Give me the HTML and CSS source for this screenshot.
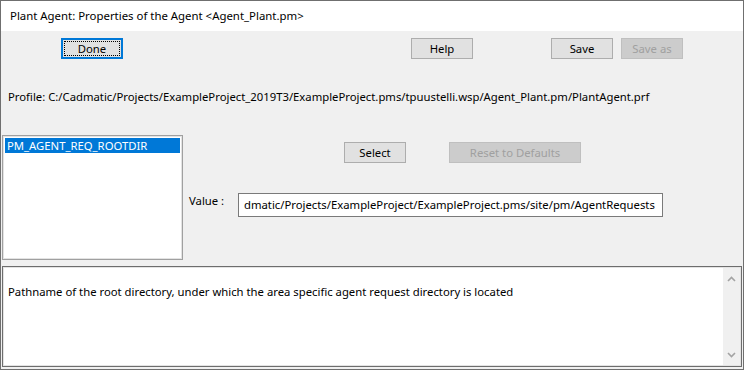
FILE: index.html
```html
<!DOCTYPE html>
<html>
<head>
<meta charset="utf-8">
<link rel="stylesheet" href="styles.css">
</head>
<body>
<div class="window">
  <div class="titlebar">Plant Agent: Properties of the Agent &lt;Agent_Plant.pm&gt;</div>
  <div class="content">
    <div class="toolbar">
      <button class="btn btn-default btn-done"><span class="focus">Done</span></button>
      <button class="btn btn-help">Help</button>
      <button class="btn btn-save">Save</button>
      <button class="btn btn-saveas" disabled>Save as</button>
    </div>
    <div class="profile">Profile: C:/Cadmatic/Projects/ExampleProject_2019T3/ExampleProject.pms/tpuustelli.wsp/Agent_Plant.pm/PlantAgent.prf</div>
    <div class="middle">
      <div class="listbox">
        <div class="item selected">PM_AGENT_REQ_ROOTDIR</div>
      </div>
      <div class="side">
        <div class="side-row">
          <button class="btn btn-select">Select</button>
          <button class="btn btn-reset" disabled>Reset to Defaults</button>
        </div>
        <div class="value-row">
          <span class="value-label">Value :</span>
          <div class="value-input">dmatic/Projects/ExampleProject/ExampleProject.pms/site/pm/AgentRequests</div>
        </div>
      </div>
    </div>
    <div class="desc">
      <div class="desc-text">Pathname of the root directory, under which the area specific agent request directory is located</div>
      <div class="scrollbar">
        <svg class="arrow" width="9" height="6" viewBox="0 0 9 6"><polyline points="1,5 4.5,1.5 8,5" fill="none" stroke="#a3a3a3" stroke-width="1.6"/></svg>
        <svg class="arrow" width="9" height="6" viewBox="0 0 9 6"><polyline points="1,1 4.5,4.5 8,1" fill="none" stroke="#a3a3a3" stroke-width="1.6"/></svg>
      </div>
    </div>
  </div>
</div>
</body>
</html>
```
FILE: styles.css
```css
* { box-sizing: border-box; }
html, body { margin: 0; padding: 0; }
body {
  width: 744px;
  height: 370px;
  font-family: "Noto Sans", "Open Sans", sans-serif;
  font-size: 11.3px;
  color: #000;
  background: #f0f0f0;
}
.window {
  width: 744px;
  height: 370px;
  border: 1px solid #6f6f6f;
  background: #f0f0f0;
  display: flex;
  flex-direction: column;
}
.titlebar {
  height: 30px;
  background: #fff;
  line-height: 30px;
  padding-left: 9px;
  font-size: 11.4px;
}
.content {
  flex: 1;
  display: flex;
  flex-direction: column;
}
.toolbar {
  display: flex;
  margin-top: 7px;
  height: 21px;
}
.btn {
  font-family: inherit;
  font-size: 11.3px;
  color: #000;
  background: #e1e1e1;
  border: 1px solid #adadad;
  height: 21px;
  width: 62px;
  padding: 0;
  margin: 0;
  line-height: 17px;
}
.btn:disabled {
  background: #cccccc;
  border-color: #bfbfbf;
  color: #a0a0a0;
}
.btn-default {
  border: 2px solid #0078d7;
  padding: 1px;
}
.btn-default .focus {
  display: block;
  height: 15px;
  line-height: 14px;
  border: 1px dotted #000;
}
.btn-done { margin-left: 60px; }
.btn-help { margin-left: 288px; }
.btn-save { margin-left: 78px; }
.btn-saveas { margin-left: 8px; }
.profile {
  margin-top: 30px;
  margin-left: 7px;
  line-height: 16px;
  white-space: nowrap;
}
.middle {
  display: flex;
  margin-top: 30px;
}
.listbox {
  margin-left: 1px;
  width: 181px;
  height: 125px;
  background: #fff;
  border: 1px solid #a0a0a0;
  box-shadow: inset 0 0 0 1px #e3e3e3;
  padding: 2px 2px;
}
.item {
  height: 15px;
  line-height: 15px;
  padding-left: 2px;
  white-space: nowrap;
}
.item.selected {
  background: #0078d7;
  color: #fff;
}
.side {
  display: flex;
  flex-direction: column;
}
.side-row {
  display: flex;
  margin-top: 7px;
}
.btn-select { margin-left: 161px; }
.btn-reset { margin-left: 43px; width: 132px; }
.value-row {
  display: flex;
  margin-top: 30px;
  align-items: flex-start;
}
.value-label {
  margin-left: 6px;
  width: 49px;
  line-height: 16px;
}
.value-input {
  width: 425px;
  height: 24px;
  background: #fff;
  border: 1px solid #7a7a7a;
  line-height: 22px;
  padding-left: 5px;
  white-space: nowrap;
  overflow: hidden;
}
.desc {
  margin-top: 6px;
  margin-left: 1px;
  width: 740px;
  height: 101px;
  background: #fff;
  border: 1px solid #6d6d6d;
  box-shadow: inset 0 0 0 1px #e3e3e3;
  display: flex;
}
.desc-text {
  flex: 1;
  padding-top: 17px;
  padding-left: 5px;
  line-height: 16px;
  white-space: nowrap;
}
.scrollbar {
  width: 17px;
  margin: 1px 1px 1px 0;
  background: #f0f0f0;
  display: flex;
  flex-direction: column;
  justify-content: space-between;
  align-items: center;
  padding: 8px 0 7px;
}
.arrow { display: block; }
```
